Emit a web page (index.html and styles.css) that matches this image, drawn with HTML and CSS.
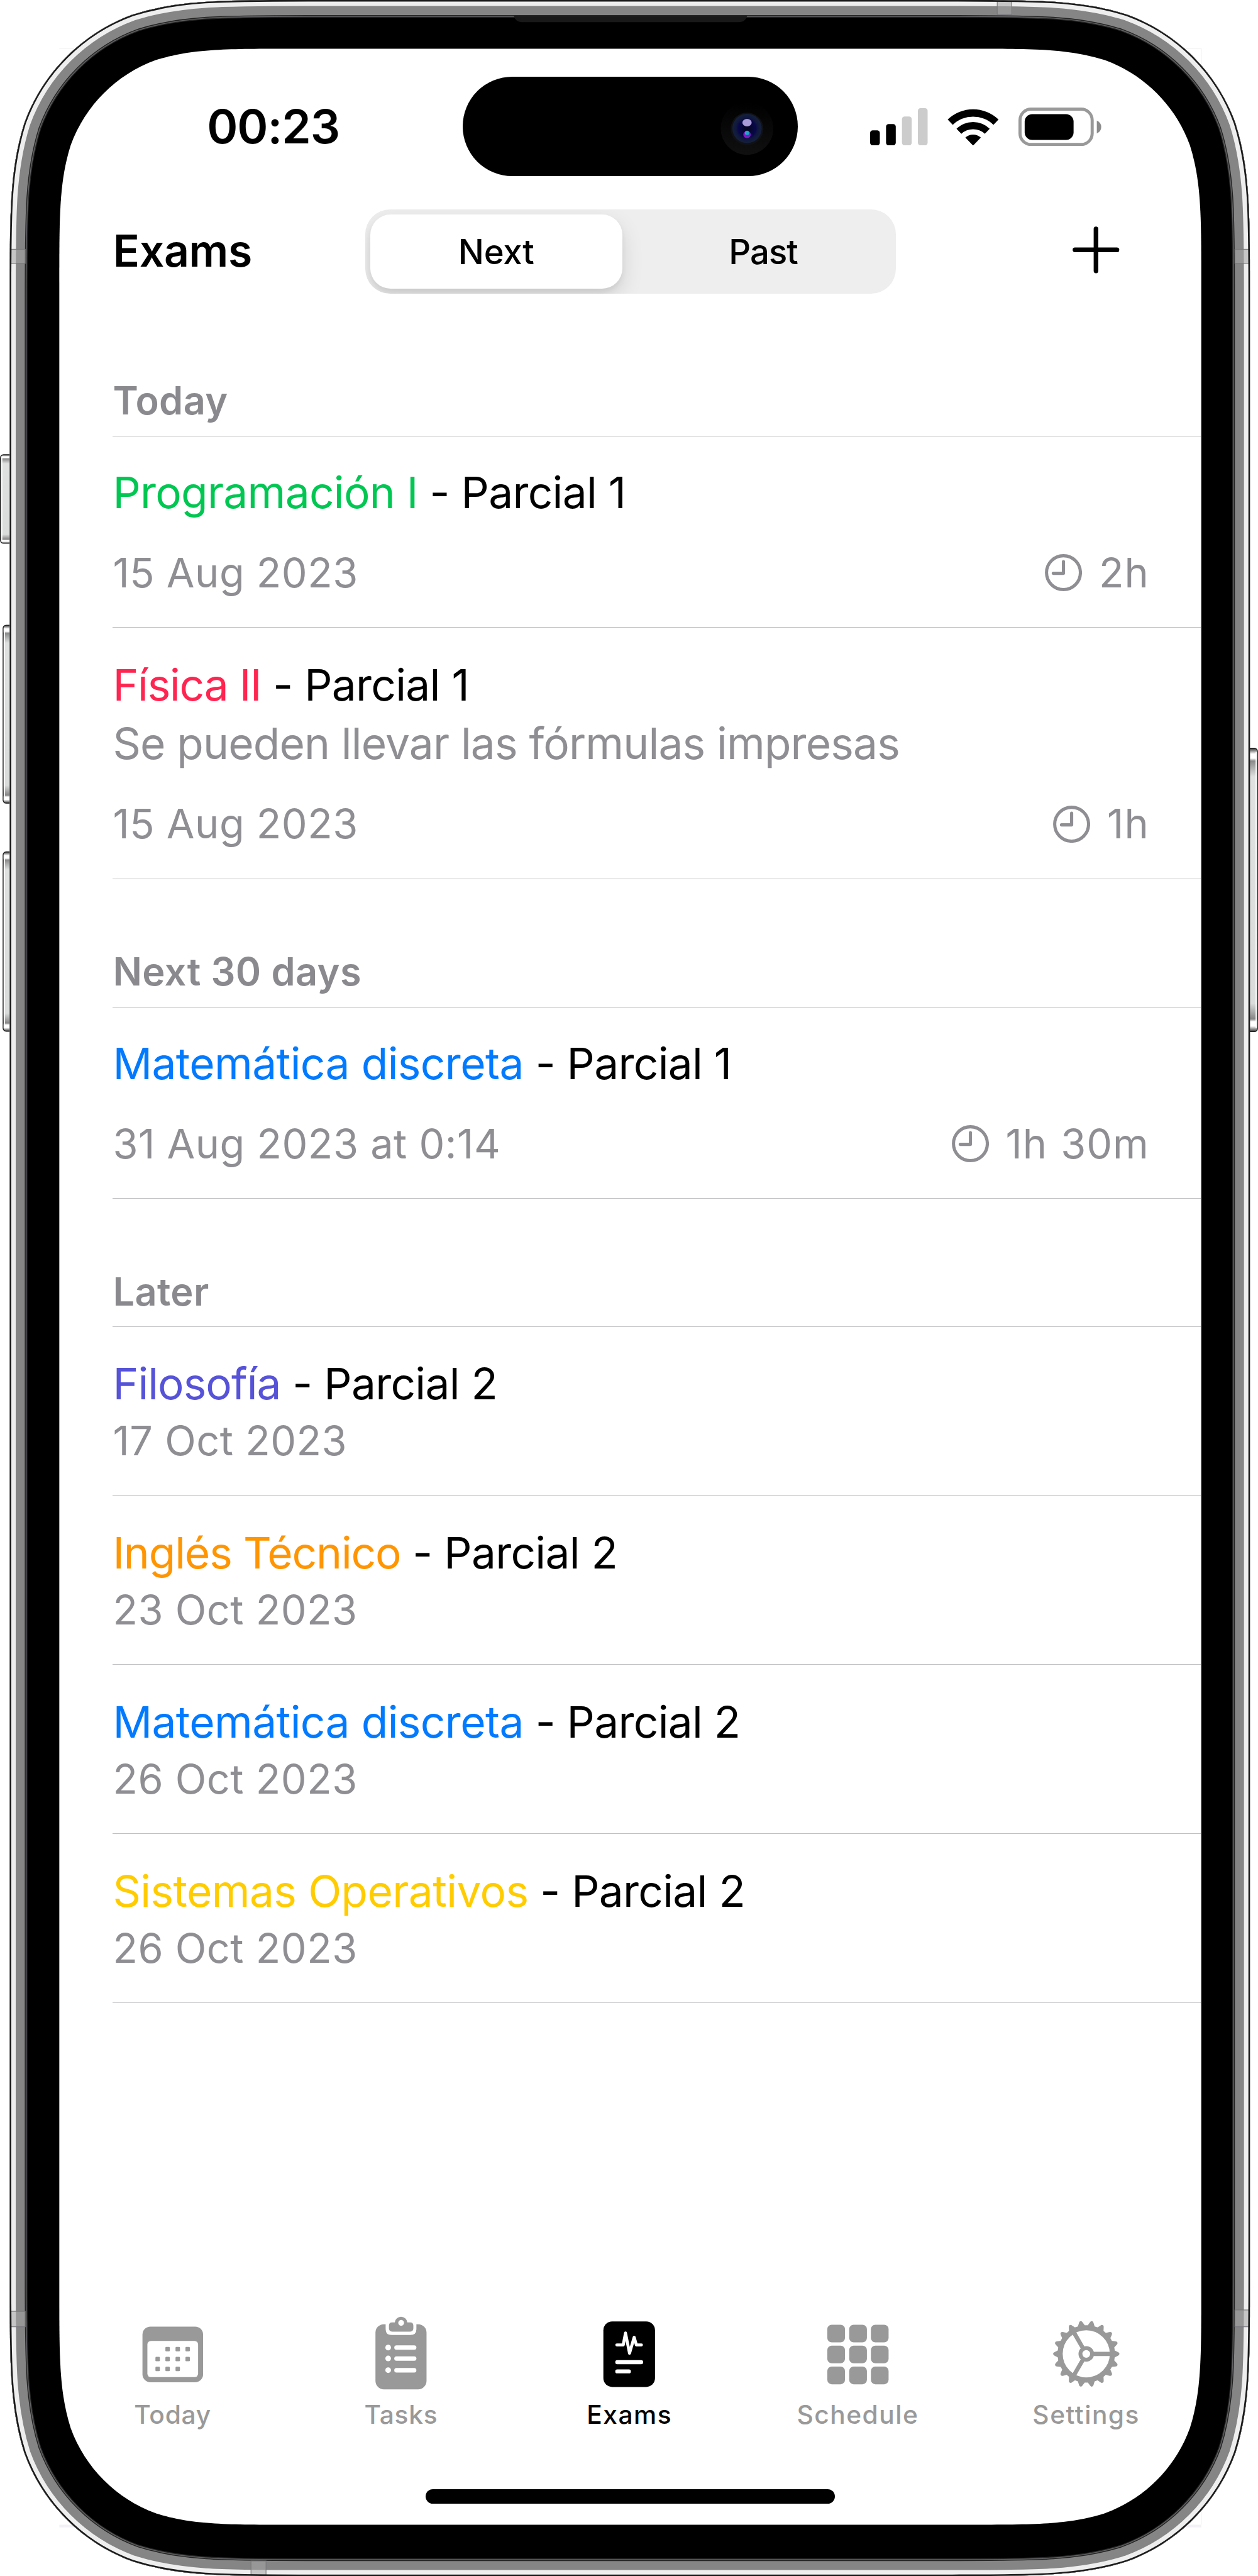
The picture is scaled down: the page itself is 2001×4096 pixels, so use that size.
FILE: index.html
```html
<!DOCTYPE html>
<html lang="en">
<head>
<meta charset="utf-8">
<title>Exams</title>
<link rel="stylesheet" href="styles.css">
</head>
<body>
<div class="device">
  <svg class="frame" viewBox="0 0 2842 5818" aria-hidden="true">
    <defs>
      <path id="body" d="M694.6 0H2151.4C2345.1 0 2441.9 0 2546.1 33C2660 74.4 2749.6 164 2791 277.9C2824 382.1 2824 478.9 2824 672.6V5145.4C2824 5339.1 2824 5435.9 2791 5540.1C2749.6 5654 2660 5743.6 2546.1 5785C2441.9 5818 2345.1 5818 2151.4 5818H694.6C500.9 5818 404.1 5818 299.9 5785C186 5743.6 96.4 5654 55 5540.1C22 5435.9 22 5339.1 22 5145.4V672.6C22 478.9 22 382.1 55 277.9C96.4 164 186 74.4 299.9 33C404.1 0 500.9 0 694.6 0Z"/>
      <clipPath id="bodyClip"><use href="#body"/></clipPath>
      <linearGradient id="btn" x1="0" y1="0" x2="0" y2="1">
        <stop offset="0" stop-color="#333"/><stop offset=".02" stop-color="#fff"/><stop offset=".035" stop-color="#fff"/><stop offset=".045" stop-color="#8a8a8a"/><stop offset=".1" stop-color="#dfe1e0"/>
        <stop offset=".9" stop-color="#dadcdb"/><stop offset=".955" stop-color="#858585"/><stop offset=".965" stop-color="#fff"/><stop offset=".98" stop-color="#fff"/><stop offset="1" stop-color="#333"/>
      </linearGradient>
    </defs>
    <!-- corners of the display layer showing behind the body -->
    <path d="M134 109.5H2714V5702" fill="none" stroke="#f0f0f0" stroke-width="1.5"/>
    <path d="M134 5702H2714V5708H134Z" fill="#f3f1f6"/>
    <!-- side buttons -->
    <g fill="url(#btn)" stroke="#1f1f1f" stroke-width="2">
      <rect x="1" y="1027" width="36" height="200" rx="7"/>
      <rect x="7" y="1412" width="30" height="402" rx="7"/>
      <rect x="7" y="1924" width="30" height="405" rx="7"/>
      <rect x="2805" y="1690" width="36" height="640" rx="7"/>
    </g>
    <path d="M4 1034V1220M10 1420V1806M10 1932V2321M2838 1698V2322" stroke="#fff" stroke-width="2.5"/>
    <!-- metal band, drawn from the inner ring outwards -->
    <use href="#body" fill="#000"/>
    <g clip-path="url(#bodyClip)" fill="none">
      <use href="#body" stroke="#262626" stroke-width="80"/>
      <use href="#body" stroke="#626265" stroke-width="76"/>
      <use href="#body" stroke="#222" stroke-width="72"/>
      <use href="#body" stroke="#858585" stroke-width="68"/>
      <use href="#body" stroke="#eee" stroke-width="27"/>
      <g fill="#a5a5a5" fill-opacity=".55" stroke="#77777c" stroke-width="1.6">
        <rect x="24" y="563" width="33" height="32"/><rect x="2790" y="563" width="32" height="32"/>
        <rect x="24" y="5220" width="33" height="35"/><rect x="2790" y="5217" width="32" height="38"/>
        <rect x="2253" y="2" width="33" height="31"/><rect x="567" y="5784" width="34" height="32"/>
      </g>
      <use href="#body" stroke="#1b1b1b" stroke-width="7"/>
    </g>
    <path d="M1161 36H1688Q1684 50 1670 50H1179Q1165 50 1161 36Z" fill="#191919"/>
    <path class="glass" d="M661.4 110H2186.6C2338.5 110 2414.4 110 2496.1 135.8C2585.4 168.3 2655.7 238.6 2688.2 327.9C2714 409.6 2714 485.5 2714 637.4V5174.6C2714 5326.5 2714 5402.4 2688.2 5484.1C2655.7 5573.4 2585.4 5643.7 2496.1 5676.2C2414.4 5702 2338.5 5702 2186.6 5702H661.4C509.5 5702 433.6 5702 351.9 5676.2C262.6 5643.7 192.3 5573.4 159.8 5484.1C134 5402.4 134 5326.5 134 5174.6V637.4C134 485.5 134 409.6 159.8 327.9C192.3 238.6 262.6 168.3 351.9 135.8C433.6 110 509.5 110 661.4 110Z"/>
  </svg>

  <div class="screen">
    <div class="status">
      <div class="time">00:23</div>
      <div class="island">
        <svg class="camera" viewBox="0 0 120 120">
          <defs>
            <radialGradient id="lens"><stop offset="0" stop-color="#04041c"/><stop offset=".6" stop-color="#08084a"/><stop offset=".75" stop-color="#10183c"/><stop offset="1" stop-color="#14203c"/></radialGradient>
            <linearGradient id="rim" x1="0" y1="0" x2="0" y2="1"><stop offset="0" stop-color="#000"/><stop offset="1" stop-color="#101010"/></linearGradient>
          </defs>
          <circle cx="60" cy="60" r="59.5" fill="url(#rim)"/>
          <circle cx="60" cy="61" r="37" fill="#101114"/>
          <circle cx="60" cy="60" r="33" fill="url(#lens)"/>
          <ellipse cx="60" cy="47" rx="10.5" ry="8.5" fill="#a99ad8"/>
          <ellipse cx="60" cy="74" rx="8.5" ry="8" fill="#7a1ac0"/>
          <circle cx="60" cy="70" r="5" fill="#18a8c8"/>
        </svg>
      </div>
      <div class="indicators">
        <svg class="signal" viewBox="0 0 130 84">
          <rect x="0" y="50" width="22" height="34" rx="6"/><rect x="36" y="36" width="22" height="48" rx="6"/>
          <rect x="72" y="19" width="22" height="65" rx="6" fill="#ccc"/><rect x="108" y="0" width="22" height="84" rx="6" fill="#ccc"/>
        </svg>
        <svg class="wifi" viewBox="0 0 116 84">
          <path d="M0.5 25.5A83 83 0 0 1 115.5 25.5L104 37.5A67 67 0 0 0 12 37.5Z"/>
          <path d="M20.500 46.500A54 54 0 0 1 95.500 46.500L84.500 58A38.500 38.500 0 0 0 31.500 58Z"/>
          <path d="M40.500 66.500A26 26 0 0 1 75.500 66.500L58 84.500Z"/>
        </svg>
        <svg class="battery" viewBox="0 0 188 87">
          <rect x="3.5" y="3.500" width="163" height="80" rx="25" fill="none" stroke="#999" stroke-width="7"/>
          <rect x="14" y="15" width="110.500" height="58" rx="17"/>
          <path d="M177 29.500Q187 34 187 44Q187 54 177 58.500Z" fill="#8c8c8c"/>
        </svg>
      </div>
    </div>

    <header class="nav">
      <h1 class="nav-title">Exams</h1>
      <div class="segments">
        <div class="segment segment-on">Next</div>
        <div class="segment segment-off">Past</div>
      </div>
      <svg class="plus" viewBox="0 0 106 106"><path d="M53 5.500V100.500M5.500 53H100.500" stroke="#000" stroke-width="10.500" stroke-linecap="round"/></svg>
    </header>

    <main class="list">
      <section class="group">
        <h2 class="heading">Today</h2>
        <article class="exam">
          <p class="title"><span class="green">Programación I</span> - Parcial 1</p>
          <div class="meta meta-spaced"><span>15 Aug 2023</span><span class="duration"><svg class="clock" viewBox="0 0 84 84"><circle cx="42" cy="42" r="38.300"/><path d="M42 17V43.500H19"/></svg>2h</span></div>
        </article>
        <article class="exam">
          <p class="title"><span class="red">Física II</span> - Parcial 1</p>
          <p class="note">Se pueden llevar las fórmulas impresas</p>
          <div class="meta meta-spaced"><span>15 Aug 2023</span><span class="duration"><svg class="clock" viewBox="0 0 84 84"><circle cx="42" cy="42" r="38.300"/><path d="M42 17V43.500H19"/></svg>1h</span></div>
        </article>
      </section>
      <section class="group">
        <h2 class="heading">Next 30 days</h2>
        <article class="exam">
          <p class="title"><span class="blue">Matemática discreta</span> - Parcial 1</p>
          <div class="meta meta-spaced"><span>31 Aug 2023 at 0:14</span><span class="duration"><svg class="clock" viewBox="0 0 84 84"><circle cx="42" cy="42" r="38.300"/><path d="M42 17V43.500H19"/></svg>1h 30m</span></div>
        </article>
      </section>
      <section class="group">
        <h2 class="heading">Later</h2>
        <article class="exam">
          <p class="title"><span class="indigo">Filosofía</span> - Parcial 2</p>
          <div class="meta"><span>17 Oct 2023</span></div>
        </article>
        <article class="exam">
          <p class="title"><span class="orange">Inglés Técnico</span> - Parcial 2</p>
          <div class="meta"><span>23 Oct 2023</span></div>
        </article>
        <article class="exam">
          <p class="title"><span class="blue">Matemática discreta</span> - Parcial 2</p>
          <div class="meta"><span>26 Oct 2023</span></div>
        </article>
        <article class="exam">
          <p class="title"><span class="yellow">Sistemas Operativos</span> - Parcial 2</p>
          <div class="meta"><span>26 Oct 2023</span></div>
        </article>
      </section>
    </main>

    <nav class="tabs">
      <div class="tab">
        <svg class="tab-icon" viewBox="0 0 170 170">
          <rect x="16.500" y="23.300" width="137" height="125.700" rx="18"/>
          <rect x="27.600" y="55.600" width="114.600" height="82" rx="8" fill="#fff"/>
          <g><rect x="68.300" y="69.300" width="10" height="10" rx="2"/><rect x="91.200" y="69.300" width="10" height="10" rx="2"/><rect x="113.600" y="69.300" width="10" height="10" rx="2"/>
          <rect x="45.800" y="91.700" width="10" height="10" rx="2"/><rect x="68.300" y="91.700" width="10" height="10" rx="2"/><rect x="91.200" y="91.700" width="10" height="10" rx="2"/><rect x="113.600" y="91.700" width="10" height="10" rx="2"/>
          <rect x="45.800" y="114.100" width="10" height="10" rx="2"/><rect x="68.300" y="114.100" width="10" height="10" rx="2"/><rect x="91.200" y="114.100" width="10" height="10" rx="2"/></g>
        </svg>
        <span>Today</span>
      </div>
      <div class="tab">
        <svg class="tab-icon" viewBox="0 0 170 170">
          <rect x="27.300" y="18" width="115.400" height="147" rx="19"/>
          <path d="M50.300 10V29Q50.300 42.300 64 42.300H106Q119.800 42.300 119.800 29V10Z" fill="#fff"/>
          <path fill-rule="evenodd" d="M57.800 21Q57.800 13.700 65 13.700H71A14.200 14.200 0 0 1 99.200 13.700H105.700Q112.900 13.700 112.900 21V27.500Q112.900 34.700 105.700 34.700H65Q57.800 34.700 57.800 27.500ZM85.300 8.300A6.500 6.500 0 1 0 85.400 8.300Z"/>
          <g fill="#fff"><circle cx="56" cy="70.700" r="6.400"/><circle cx="56" cy="95.300" r="6.400"/><circle cx="56" cy="121.700" r="6.400"/>
          <rect x="69.800" y="65.700" width="50" height="10" rx="5"/><rect x="69.800" y="90.500" width="50" height="10" rx="5"/><rect x="69.800" y="117" width="50" height="10" rx="5"/></g>
        </svg>
        <span>Tasks</span>
      </div>
      <div class="tab tab-on">
        <svg class="tab-icon" viewBox="0 0 170 170">
          <rect x="26.600" y="11.700" width="116.700" height="148" rx="20"/>
          <path d="M57 64.700H71.500L76.600 37.800L85.700 83.500L96.200 47.500L101.200 64.700H112.600" fill="none" stroke="#fff" stroke-width="6.800" stroke-linecap="round" stroke-linejoin="round"/>
          <path d="M58 103.700H112M58 124.500H84.300" stroke="#fff" stroke-width="9" stroke-linecap="round"/>
        </svg>
        <span>Exams</span>
      </div>
      <div class="tab">
        <svg class="tab-icon" viewBox="0 0 170 170">
          <g id="cells"><rect x="15.500" y="19" width="40" height="40" rx="10"/><rect x="65" y="19" width="40" height="40" rx="10"/><rect x="114" y="19" width="40" height="40" rx="10"/></g>
          <use href="#cells" y="47.300"/><use href="#cells" y="94.600"/>
        </svg>
        <span>Schedule</span>
      </div>
      <div class="tab">
        <svg class="tab-icon" viewBox="0 0 170 170">
          <g fill="none" stroke="currentColor"><circle cx="85" cy="85" r="59" stroke-width="11.500"/><circle cx="85" cy="85" r="13.200" stroke-width="8.800"/>
          <path d="M101 85H143M77 71.140L56 34.770M77 98.860L56 135.230" stroke-width="9.500"/></g>
          <defs><g id="teeth"><path id="tooth" d="M146 75.500L156 80.500Q160 82 160 85Q160 88 156 89.500L146 94.500Z"/>
          <use href="#tooth" transform="rotate(20 85 85)"/><use href="#tooth" transform="rotate(40 85 85)"/></g></defs>
          <use href="#teeth"/><use href="#teeth" transform="rotate(60 85 85)"/><use href="#teeth" transform="rotate(120 85 85)"/><use href="#teeth" transform="rotate(180 85 85)"/><use href="#teeth" transform="rotate(240 85 85)"/><use href="#teeth" transform="rotate(300 85 85)"/>
        </svg>
        <span>Settings</span>
      </div>
    </nav>
    <div class="home-bar"></div>
  </div>
</div>
</body>
</html>
```

FILE: styles.css
```css
/* 1rem is 100 design units; the device is 28.42 x 58.18 rem */
html { font-size: 70.404px; }
body { margin: 0; background: #fff; font-family: Inter, "Liberation Sans", sans-serif; color: #000; overflow: hidden; }
h1, h2, p { margin: 0; font-weight: 400; }
svg { display: block; fill: currentColor; flex: none; }

.device { display: grid; width: 2001px; height: 4096px; }
.frame, .screen { grid-area: 1 / 1; }
.frame { width: 28.42rem; height: 58.18rem; }
.glass { fill: #fff; }
.screen { margin: 1.1rem 0 0 1.34rem; width: 25.8rem; height: 55.92rem; display: flex; flex-direction: column; z-index: 1; }

/* status bar */
.status { display: grid; grid-template-columns: 9.12rem 7.56rem 9.12rem; align-items: center; height: 3.52rem; }
.time { padding-left: 3.335rem; font-size: 1.06rem; font-weight: 600; letter-spacing: -.014em; line-height: 1.2rem; }
.island { display: flex; align-items: center; justify-content: flex-end; height: 2.24rem; padding-right: .545rem; box-sizing: border-box; border-radius: 1.12rem; background: #000; }
.camera { width: 1.2rem; height: 1.2rem; margin-top: .08rem; }
.indicators { display: flex; align-items: center; padding-left: 1.64rem; }
.signal { width: 1.3rem; height: .84rem; }
.wifi { width: 1.16rem; height: .84rem; margin-left: .45rem; }
.battery { width: 1.88rem; height: .87rem; margin-left: .445rem; }

/* navigation bar */
.nav { display: grid; grid-template-columns: 6.91rem 11.99rem 6.9rem; align-items: center; height: 2.12rem; }
.nav-title { padding: 0 0 .02rem 1.215rem; font-size: .99rem; font-weight: 600; letter-spacing: -.005em; line-height: 1.2rem; }
.segments { display: grid; grid-template-columns: 5.7rem 1fr; height: 1.914rem; padding: .116rem .11rem; box-sizing: border-box; border-radius: .56rem; background: #eee; overflow: hidden; }
.segment { display: flex; align-items: center; justify-content: center; font-size: .773rem; font-weight: 500; letter-spacing: -.003em; }
.segment-on { background: #fff; border-radius: .46rem; box-shadow: 0 .2rem .5rem rgba(0, 0, 0, .12), 0 .08rem .12rem rgba(0, 0, 0, .06); }
.segment-off { padding-left: .3rem; letter-spacing: -.018em; }
.plus { width: 1.06rem; height: 1.06rem; margin: 0 1.845rem .06rem auto; }

/* exam list */
.list { padding: .215rem 0 0 1.2rem; }
.heading { padding: 1.559rem 0 .227rem; font-size: .87rem; font-weight: 600; line-height: 1.1rem; letter-spacing: .006em; color: #8a8a8e; border-bottom: 1px solid #bfbfc2; }
.heading, .title, .note, .meta { text-indent: .008rem; }
.exam { padding: .628rem 0 .585rem; border-bottom: 1px solid #bfbfc2; }
.heading + .exam { padding-top: .613rem; }
.title, .note { font-size: .986rem; line-height: 1.33rem; letter-spacing: -.0105em; white-space: nowrap; }
.note { color: #8e8e93; letter-spacing: -.0123em; }
.meta { display: flex; justify-content: space-between; padding-right: 1.18rem; font-size: .92rem; line-height: 1.264rem; letter-spacing: .008em; color: #8e8e93; }
.meta-spaced { margin-top: .52rem; }
.duration { display: flex; align-items: center; letter-spacing: .015em; word-spacing: .03em; text-indent: 0; }
.clock { width: .84rem; height: .84rem; margin: -.02rem .38rem 0 0; fill: none; stroke: currentColor; stroke-width: 7.2; stroke-linecap: round; stroke-linejoin: round; }
.green { color: #00c752; }
.red { color: #ff2551; letter-spacing: -.018em; }
.blue { color: #007aff; letter-spacing: -.009em; }
.indigo { color: #5653d8; letter-spacing: -.014em; }
.orange { color: #ff9500; letter-spacing: -.0165em; }
.yellow { color: #ffcc00; letter-spacing: -.009em; }

/* tab bar */
.tabs { display: grid; grid-template-columns: repeat(5, 1fr); margin: auto .02rem 0 -.02rem; }
.tab { display: flex; flex-direction: column; align-items: center; gap: .17rem; font-size: .578rem; font-weight: 500; line-height: .7rem; letter-spacing: .037em; color: #999; }
.tab:nth-child(-n+2) { letter-spacing: .018em; }
.tab-on { color: #000; }
.tab-icon { width: 1.7rem; height: 1.7rem; }
.home-bar { width: 9.24rem; height: .33rem; margin: 1.34rem auto .47rem; border-radius: .165rem; background: #000; }
```
